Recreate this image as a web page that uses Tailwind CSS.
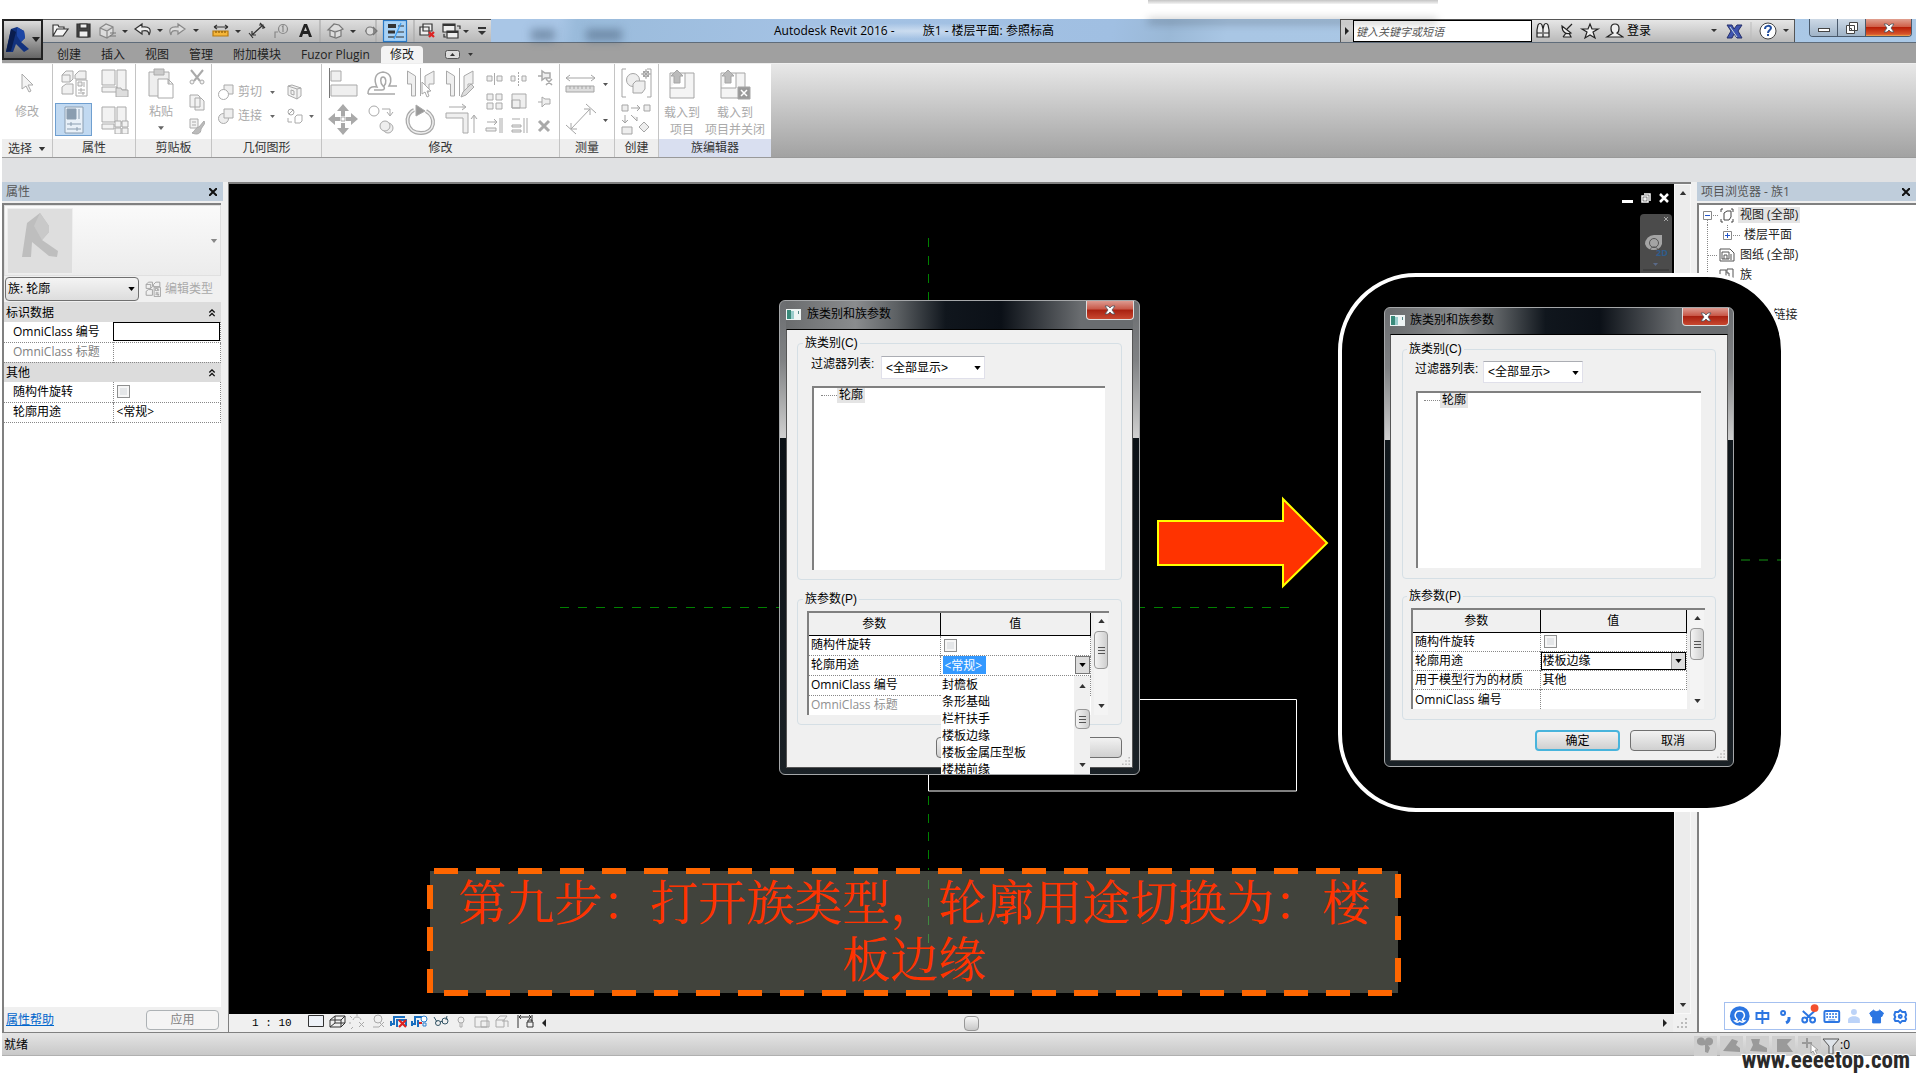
<!DOCTYPE html>
<html lang="zh-CN">
<head>
<meta charset="utf-8">
<title>Autodesk Revit 2016 - 族1 - 楼层平面: 参照标高</title>
<script src="https://cdn.jsdelivr.net/npm/@tailwindcss/browser@4"></script>
</head>
<body class="bg-white text-black text-[12px] leading-4 [font-family:'Open_Sans','Noto_Sans_CJK_SC',sans-serif]">
<svg class="hidden">
  <symbol id="tri" viewBox="0 0 8 5"><path d="M0 0h8L4 5z" fill="currentColor"/></symbol>
  <symbol id="triup" viewBox="0 0 8 5"><path d="M0 5h8L4 0z" fill="currentColor"/></symbol>
  <symbol id="types" viewBox="0 0 28 28"><path d="M2 6l4-4h7v8l-3 3H2zM2 6h8v7M15 6l4-4h7v8H15zM2 18l4-3h7v10H2z"/><path d="M16 11h11v16H16z" fill="#fff"/><path d="M18 13h4v4h-4zM24 13v5M18 21h7M21 19v4M18 24h7M23 23v3"/></symbol>
  <symbol id="chev" viewBox="0 0 8 9"><path d="M1 4l3-3 3 3M1 8l3-3 3 3" fill="none" stroke="#111" stroke-width="1.5"/></symbol>
  <symbol id="wx" viewBox="0 0 12 10"><path d="M1 1h3l2 2 2-2h3L8 5l3 4H8L6 7 4 9H1l3-4z" fill="#fff" stroke="#4a5560" stroke-width=".8"/></symbol>
  <symbol id="dlgicon" viewBox="0 0 15 11"><path d="M0 0h15v11H0z" fill="#eef4f4"/><path d="M1 1h4v9H1z" fill="#3a8a7a"/><path d="M5 2h3v8H5z" fill="#9cc"/><path d="M12 2h1v3h-1z" fill="#588"/></symbol>
  <symbol id="grip" viewBox="0 0 10 10"><path d="M8 0h2v2H8zM8 4h2v2H8zM8 8h2v2H8zM4 4h2v2H4zM4 8h2v2H4zM0 8h2v2H0z" fill="#bbb"/></symbol>
</svg>

<div class="relative flex h-screen min-h-[700px] flex-col overflow-hidden pt-[19px] pr-1 pb-6 pl-0.5">

  <!-- Title bar with the quick access toolbar -->
  <header class="relative flex h-6 shrink-0 border-b border-[#5f6c7a] bg-[linear-gradient(100deg,#a9c6e6_0%,#a9c6e6_29%,#9abbdb_30%,#a4c2e4_42%,#a0bfe2_58%,#9ab8d6_61%,#a9c6e4_64%,#aac8e6_100%)]">
    <button class="absolute top-0 left-0 z-10 flex h-[41px] w-[41px] items-center border-2 border-[#222] bg-gradient-to-b from-[#ddd] to-[#666]" aria-label="应用程序菜单">
      <svg class="h-7 w-7" viewBox="0 0 28 28"><path d="M7 3l6-2 7 4 1 7-4 4 8 7-5 3-8-8-3 8H2z" fill="#12327e"/><path d="M7 3l5 3-5 19-5 1z" fill="#0a1d4e"/><path d="M13 1l7 4 1 7-4 4-4-6z" fill="#1d46a5"/></svg>
      <svg class="h-[5px] w-2 text-[#222]"><use href="#tri"/></svg>
    </button>
    <div class="ml-[41px] flex w-[448px] shrink-0 items-center border-t border-[#555] bg-gradient-to-b from-[#dedede] to-[#b8b8b8] pl-2">
      <svg class="h-[23px] w-[440px]" viewBox="51 20 440 23" fill="none" stroke="#333" stroke-width="1.2">
        <path d="M53 36V25h5l1 2h5v2M53 36l4-7h11l-5 7z" fill="#f4f4f4"/>
        <path d="M77 24h13v13H77z" fill="#444"/><path d="M80 24h7v4h-7zM79 31h9v6h-9z" fill="#eee"/>
        <g stroke="#888"><path d="M100 28l6-4 7 3v7l-6 4-7-3zM100 28l7 3 6-4M107 31v7" fill="#ddd"/><path d="M110 33h6M110 36h6" stroke="#777"/></g>
        <path d="M142 24l-7 5 7 5v-3c5-1 7 0 7 4 3-6 0-9-7-8z" fill="#eee"/>
        <path d="M178 24l7 5-7 5v-3c-5-1-7 0-7 4-3-6 0-9 7-8z" stroke="#888" fill="#ddd"/>
        <path d="M214 27h14M214 27l3-2M214 27l3 2M228 27l-3-2M228 27l-3 2"/><path d="M213 31h15v5h-15z" fill="#f5b63a" stroke="#b87a10"/><path d="M216 31v2M219 31v2M222 31v2M225 31v2" stroke="#8a5a08"/>
        <path d="M252 35l11-10M252 31v4h4M263 29v-4h-4M249 33l4 5M260 23l5 5"/>
        <g stroke="#888"><circle cx="283" cy="29" r="4.500"/><path d="M278 32h-3v6M282 27l1-1v6"/></g>
        <path d="M299 37l5-13h3l5 13h-3l-1-3h-5l-1 3zM304 31h3l-1.500-4z" fill="#222" stroke="none" fill-rule="evenodd"/>
        <path d="M320 20v22M376 20v22M414 20v22" stroke="#aaa"/>
        <path d="M328 30l6-6 5 1 4 4-2 1v6l-5 2-6-2v-6zM330 30l5 2 6-2M335 32v6" stroke="#777" fill="#ddd"/>
        <path d="M365 31h11" stroke="#777"/><circle cx="370" cy="31" r="4" fill="#ddd" stroke="#777"/><path d="M373 27l4 4-4 4" fill="#888" stroke="#777"/>
        <rect x="383.500" y="20.500" width="23" height="21" fill="#a8d2f6" stroke="#2a78c4"/><path d="M388 26h8" stroke-width="4"/><path d="M388 32h7" stroke-width="3"/><path d="M388 37h7"/><path d="M398 26h6M397 32h7M396 37h8"/><path d="M401 23l-7 16" stroke="#3b9cf0"/>
        <path d="M423 24h9v7h-9zM420 27h9v8h-9z" fill="#eee"/><path d="M429 32l5 5M434 32l-5 5" stroke="#d22" stroke-width="2.200"/>
        <path d="M443 24h12v8h-12z" fill="#eee"/><path d="M443 25h12" stroke-width="2"/><path d="M447 31h11v7h-11z" fill="#eee"/><path d="M447 32h11" stroke-width="2"/><path d="M457 26h3v3M444 34v3h2"/>
        <path d="M478 28h8" stroke-width="2"/><path d="M478 31h8l-4 4z" fill="#333" stroke="none"/>
        <path d="M122 30h6l-3 3zM157 29h6l-3 3zM193 29h6l-3 3zM235 30h6l-3 3zM350 30h6l-3 3zM463 30h6l-3 3z" fill="#333" stroke="none"/>
      </svg>
    </div>
    <div class="relative flex flex-1 items-center">
      <span class="absolute top-2.5 left-10 h-3 w-6 bg-[#47607a]/50 blur-xs"></span>
      <span class="absolute top-2.5 left-[95px] h-3 w-9 bg-[#47607a]/50 blur-xs"></span>
      <h1 class="ml-[283px] flex gap-7 whitespace-pre bg-[radial-gradient(closest-side,#ffffff70,#ffffff00)]"><span>Autodesk Revit 2016 -</span><span>族1 - 楼层平面: 参照标高</span></h1>
      <span class="absolute top-0 left-[657px] h-1 w-[289px] bg-black/30 blur-xs"></span>
    </div>
    <div class="flex w-[455px] shrink-0 items-center border border-[#555] border-b-0 bg-gradient-to-b from-[#e6e6e6] to-[#b9b9b9]">
      <svg class="h-2 w-3 shrink-0" viewBox="0 0 12 8"><path d="M4 0l4 4-4 4z" fill="#222"/></svg>
      <input aria-label="搜索" placeholder="键入关键字或短语" class="h-[22px] w-[179px] shrink-0 border border-black bg-white px-0.5 text-[11px] italic placeholder:text-[#555]">
      <svg class="h-[22px] w-[92px] shrink-0" viewBox="1532 20 92 22" fill="#eee" stroke="#222" stroke-width="1.200">
        <path d="M1538 25c1-2 3-2 4 0l1 4v8h-6v-7zM1544 25c1-2 3-2 4 0l1 5v7h-6v-8z"/><path d="M1537 33h5M1544 33h5"/>
        <path d="M1562 26c0 6 4 9 9 7zM1567 29l5-5M1563 37h8l-2-4M1563 37l3-4"/>
        <path d="M1590 24l2 5h6l-5 3 2 6-5-3-5 3 2-6-5-3h6z"/>
        <path d="M1615 24c6 0 4 8 2 9l6 4h-16l6-4c-2-1-4-9 2-9z"/>
      </svg>
      <button class="ml-[3px] shrink-0 whitespace-nowrap">登录</button>
      <svg class="ml-[58px] h-[22px] w-[84px] shrink-0" viewBox="1710 20 84 22" fill="none" stroke="#222">
        <path d="M1712 29h6l-3 3zM1784 29h6l-3 3z" fill="#333" stroke="none"/>
        <path d="M1728 25h5l2 4 3-4h5l-4 6 4 7h-5l-3-4-2 4h-5l4-7z" fill="#3f55b0" stroke="#26306a"/><path d="M1731 27l7 10" stroke="#cdd"/>
        <path d="M1752 22v18" stroke="#bbb"/><circle cx="1769" cy="31" r="8" fill="#fff" stroke="#444"/><path d="M1766 29c0-4 6-4 6-1 0 2-3 2-3 5M1769 34v2" stroke="#234f9e" stroke-width="2"/>
      </svg>
    </div>
    <div class="mr-1 ml-3.5 flex h-[18px] w-[103px] shrink-0 overflow-hidden rounded-b border border-t-0 border-[#4a5a6c]">
      <button class="flex w-7 items-center justify-center border-r border-[#4a5a6c] bg-gradient-to-b from-[#cdd9e6] to-[#9fb3c7]" aria-label="最小化"><span class="mt-1 h-1 w-3 border border-[#444] bg-white"></span></button>
      <button class="flex w-7 items-center justify-center border-r border-[#4a5a6c] bg-gradient-to-b from-[#cdd9e6] to-[#9fb3c7]" aria-label="还原"><svg class="h-3 w-3" viewBox="0 0 12 12" fill="#fff" stroke="#444"><path d="M3.500.500h8v8h-8zM.500 3.500h8v8h-8z"/><path d="M3.500 6.500h2v2h-2z"/></svg></button>
      <button class="flex flex-1 items-center justify-center bg-[linear-gradient(#e0a090,#d0614a_45%,#b81f08_50%,#d8562c_90%,#f0b050)]" aria-label="关闭"><svg class="h-3 w-3"><use href="#wx"/></svg></button>
    </div>
  </header>

  <!-- Ribbon tabs -->
  <nav class="flex h-5 shrink-0 items-end bg-[#a0a0a0] pl-[55px] text-[#222]">
    <div class="flex h-[17px] items-center gap-5">
      <a href="#" class="w-6">创建</a><a href="#" class="w-6">插入</a><a href="#" class="w-6">视图</a><a href="#" class="w-6">管理</a><a href="#" class="w-12">附加模块</a><a href="#" class="w-[71px] whitespace-nowrap">Fuzor Plugin</a>
    </div>
    <a href="#" class="ml-[9px] flex h-[17px] w-[42px] items-center justify-center rounded-t-sm bg-[#f4f4f4]">修改</a>
    <button class="ml-[22px] flex h-[17px] items-center gap-2" aria-label="最小化面板"><svg class="h-2.5 w-[15px]" viewBox="0 0 15 10"><rect x=".5" y=".5" width="14" height="8" rx="2" fill="#ddd" stroke="#555"/><path d="M5 6h5L7.500 3z" fill="#333"/></svg><svg class="h-[3px] w-[5px] text-[#333]"><use href="#tri"/></svg></button>
  </nav>

  <!-- Ribbon -->
  <div class="flex h-[95px] shrink-0 border-t border-b border-t-[#eee] border-b-[#999] bg-gradient-to-b from-[#e8e8e8] to-[#a2a2a2] text-[#aaa]">
    <section class="flex w-[51px] flex-col border-r border-[#c4c4c4] bg-white">
      <button class="flex flex-1 flex-col items-center pt-2"><svg class="h-6 w-4" viewBox="0 0 16 24" fill="#f4f4f4" stroke="#aaa"><path d="M3 2v15l4-3 3 6 2-1-3-6h5z"/></svg><span class="mt-2">修改</span></button>
      <h2 class="flex h-[18px] items-center justify-center gap-1.5 bg-[#eee] pt-0.5 text-[#333]">选择<svg class="h-1 w-2"><use href="#tri"/></svg></h2>
    </section>
    <section class="flex w-[83px] flex-col border-r border-[#c4c4c4] bg-white">
      <div class="grid flex-1 grid-cols-2 place-items-center pt-0.5">
        <svg class="h-7 w-7" fill="#f0f0f0" stroke="#aaa"><use href="#types"/></svg>
        <svg class="h-7 w-7" viewBox="0 0 28 28" fill="#f2f2f2" stroke="#aaa"><path d="M1 1h13v15H1zM16 1h9v20h-9zM1 18h15v5H1z"/><path d="M15 19h5l1 2h6v7H15z" fill="#ddd"/></svg>
        <button class="flex h-[33px] w-[37px] items-center justify-center border border-[#6f9fd0] bg-[#c1d9f1]" aria-label="属性"><svg class="h-7 w-5" viewBox="0 0 20 28" fill="#e8f0f8" stroke="#8a9db0"><path d="M1 1h18v26H1z"/><path d="M3 3h9v10H3z" fill="#8a9db0"/><path d="M15 3v10M3 18h14M7 16v4M3 23h14M13 21v4"/></svg></button>
        <svg class="h-7 w-7" viewBox="0 0 28 28" fill="#f2f2f2" stroke="#aaa"><path d="M1 1h13v15H1zM16 1h9v16h-9zM1 18h12v5H1z"/><path d="M14 15h6v6h-6zM21 15h6v6h-6zM14 22h6v6h-6zM21 22h6v6h-6z"/></svg>
      </div>
      <h2 class="h-[18px] bg-[#eee] pt-px text-center text-[#333]">属性</h2>
    </section>
    <section class="flex w-[76px] flex-col border-r border-[#c4c4c4] bg-white">
      <div class="flex flex-1 justify-between pt-1 pr-1.5 pl-[11px]">
        <button class="flex flex-col items-center"><svg class="h-8 w-7" viewBox="0 0 28 32" fill="#eee" stroke="#aaa"><path d="M2 4h20v24H2z"/><path d="M7 1h10v6H7z" fill="#ccc"/><path d="M11 11h10l5 5v14H11zM21 11v5h5" fill="#fff"/></svg><span class="mt-1">粘贴</span><svg class="mt-1.5 h-1 w-1.5 text-[#666]"><use href="#tri"/></svg></button>
        <svg class="h-[70px] w-4" viewBox="0 -1 16 70" fill="#f2f2f2" stroke="#aaa"><path d="M2 1l9 11M14 1L5 12" stroke-width="2"/><circle cx="3" cy="13" r="2"/><circle cx="13" cy="13" r="2"/><path d="M1 26h8l2 2v10H1zM6 29h6l3 3v9H6z"/><path d="M1 50h8v9H1zM3 53h4M3 56h4"/><path d="M15 52l-5 6c-3 0-4 4-7 6 5 2 9 1 9-4l4-6z" fill="#bbb"/></svg>
      </div>
      <h2 class="h-[18px] bg-[#eee] pt-px text-center text-[#333]">剪贴板</h2>
    </section>
    <section class="flex w-[110px] flex-col border-r border-[#c4c4c4] bg-white">
      <div class="flex flex-1 flex-col gap-2 px-1.5 pt-5">
        <div class="flex h-4 items-center"><svg class="h-4 w-4 shrink-0" viewBox="0 0 16 16" fill="#fff" stroke="#aaa"><path d="M6 1h9v9H6z" fill="#eee"/><circle cx="5.500" cy="10.500" r="5"/></svg><span class="ml-1 shrink-0">剪切</span><svg class="ml-2 h-[3px] w-[5px] shrink-0 text-[#666]"><use href="#tri"/></svg><svg class="ml-3 h-4 w-4 shrink-0" viewBox="0 0 16 16" fill="#f2f2f2" stroke="#aaa"><path d="M1 2l4-1 9 3v8l-4 3-9-4zM10 5v10M10 5l4-1M1 2l9 3M4 6l3 1v4l-3-1z"/></svg></div>
        <div class="flex h-4 items-center"><svg class="h-4 w-4 shrink-0" viewBox="0 0 16 16" fill="#eee" stroke="#aaa"><circle cx="5.500" cy="10.500" r="5"/><path d="M6 1h9v9H6z"/></svg><span class="ml-1 shrink-0">连接</span><svg class="ml-2 h-[3px] w-[5px] shrink-0 text-[#666]"><use href="#tri"/></svg><svg class="ml-3 h-4 w-4 shrink-0" viewBox="0 0 16 16" fill="#fff" stroke="#aaa"><circle cx="4" cy="4" r="3"/><path d="M2 6l4-4M1 10v4h4M8 9l2-2h5v6l-2 2H8z"/></svg><svg class="ml-1.5 h-[3px] w-[5px] shrink-0 text-[#666]"><use href="#tri"/></svg></div>
      </div>
      <h2 class="h-[18px] bg-[#eee] pt-px text-center text-[#333]">几何图形</h2>
    </section>
    <section class="flex w-[238px] flex-col border-r border-[#c4c4c4] bg-white">
      <svg class="w-[237px] flex-1" viewBox="322 64 237 75" fill="#efefef" stroke="#a9a9a9">
        <path d="M329.500 68v30" stroke="#777"/><path d="M331 71h10v10h-10zM331 85h26v11h-26z"/>
        <path d="M368 94h27M368 94c0-6 3-8 9-7-3-6-3-14 6-15 9 1 9 9 6 14h8M374 90h8c3 0 3-3 1-4-3-3-3-9 0-9s4 6 1 9" fill="none" stroke-width="1.500"/>
        <path d="M407.500 71l8 5v20h-4v-12h-4zM434 71l-9 5v16h4v-8h5zM420.500 68v28"/><path d="M422 82v12l3-2 2 5 2-1-2-5h4z" fill="#fff"/>
        <path d="M446.500 71l8 5v20h-4v-12h-4zM473 71l-9 5v16h4v-8h5zM459.500 68v28"/><path d="M461 97l2-5 8-8 3 3-8 8z" fill="#ddd"/>
        <path d="M343 104l6 7h-4v5h-4v-5h-4zM343 135l6-7h-4v-5h-4v5h-4zM328 119l7-6v4h5v4h-5v4zM358 119l-7-6v4h-5v4h5v4z" fill="#a9a9a9" stroke="none"/><path d="M341 117h4v4h-4z" fill="#fff"/>
        <circle cx="374" cy="111" r="5" fill="#fff"/><circle cx="388" cy="128" r="5"/><circle cx="385" cy="126" r="5"/><path d="M382 109h8v6M387 112l3 4 3-4" fill="none"/>
        <path d="M414 110c-10 4-9 23 7 23 14 0 16-16 5-22" fill="none" stroke-width="4"/><path d="M414 110c-10 4-9 23 7 23 14 0 16-16 5-22" fill="none" stroke="#eee" stroke-width="1.500"/><path d="M416 105l9 6-9 5z" fill="#999"/>
        <path d="M446 113h22v20h-5v-15h-17zM449 107h16M462 104l4 3-4 3M474 133v-17M471 119l3-4 3 4"/>
        <path d="M487 76h5v5h-5zM497 76h5v5h-5zM494.500 73v12M511 76h4v5h-4zM522 76h4v5h-4z"/><path d="M518.500 72v14" stroke-dasharray="2 1"/>
        <path d="M538 76h4M542 71v9l3-2h5v-5h-5zM546 79l6 6M552 79l-6 6" stroke-width="1.500"/>
        <path d="M487 94h6v6h-6zM496 94h6v6h-6zM487 103h6v6h-6zM496 103h6v6h-6zM512 94h14v14h-14zM512 100h8v8h-8zM538 102h4M542 97v10l3-3h5v-5h-5z"/>
        <path d="M487 122h10M494 119l3 3-3 3M486 128h10v3h-10zM500 118v15M502 118v15M512 119h8M512 125h9v2h-9zM512 130h9v2h-9zM524 118v15M527 118v15"/>
        <path d="M539 121l10 10M549 121l-10 10" stroke-width="3"/>
      </svg>
      <h2 class="h-[18px] bg-[#eee] pt-px text-center text-[#333]">修改</h2>
    </section>
    <section class="flex w-[55px] flex-col border-r border-[#c4c4c4] bg-white">
      <svg class="w-[54px] flex-1" viewBox="560 64 54 75" fill="#ddd" stroke="#a5a5a5"><path d="M566 78h29M570 75l-4 3 4 3M591 75l4 3-4 3" fill="none"/><path d="M566 86h28v6h-28z"/><path d="M570 86v3M574 86v3M578 86v3M582 86v3M586 86v3M590 86v3"/><path d="M571 129l19-20M571 123v6h6M590 115v-6h-6M566 125l10 9M586 104l10 9" fill="none"/><path d="M603 83h5l-2.500 3zM603 119h5l-2.500 3z" fill="#555" stroke="none"/></svg>
      <h2 class="h-[18px] bg-[#eee] pt-px text-center text-[#333]">测量</h2>
    </section>
    <section class="flex w-[44px] flex-col border-r border-[#c4c4c4] bg-white">
      <svg class="w-[43px] flex-1" viewBox="615 64 43 75" fill="#eee" stroke="#a5a5a5"><path d="M626 69h-4v28h4M647 69h4v28h-4" fill="none"/><circle cx="633" cy="80" r="6.500"/><path d="M633 84l3-3h9v8l-3 4h-9z"/><circle cx="646" cy="74" r="3"/><path d="M646 69v10M641 74h10M643 71l6 6M649 71l-6 6"/><path d="M622 105h6v6h-6zM644 105h6v6h-6zM631 108h9M637 105l3 3-3 3M625 115v8M622 120l3 3 3-3M631 115l6 6v-4M622 127h10v7h-10zM644 122l5 5-5 5-5-5z"/></svg>
      <h2 class="h-[18px] bg-[#eee] pt-px text-center text-[#333]">创建</h2>
    </section>
    <section class="flex w-[112px] flex-col bg-white">
      <div class="flex flex-1 justify-between pr-[5px] pl-[3px]">
        <button class="flex w-10 flex-col items-center pt-1"><svg class="h-8 w-7" viewBox="0 0 28 32" fill="#f4f4f4" stroke="#a5a5a5"><path d="M2 5h24v25H2zM2 20h15V5"/><path d="M9 2l6 6h-3v7H6V8H3z" fill="#bbb"/></svg><span class="mt-1 leading-[17px]">载入到<br>项目</span></button>
        <button class="flex w-[62px] flex-col items-center pt-1"><svg class="h-8 w-8" viewBox="0 0 32 32" fill="#f4f4f4" stroke="#a5a5a5"><path d="M2 5h24v25H2zM2 20h15V5"/><path d="M9 2l6 6h-3v7H6V8H3z" fill="#bbb"/><path d="M19 19h12v12H19z" fill="#999"/><path d="M22 22l6 6M28 22l-6 6" stroke="#fff" stroke-width="1.500"/></svg><span class="mt-1 leading-[17px] whitespace-nowrap">载入到<br>项目并关闭</span></button>
      </div>
      <h2 class="h-[18px] bg-[#d9dff0] pt-px text-center text-[#333]">族编辑器</h2>
    </section>
  </div>
  <div class="h-6 shrink-0 bg-[#e0e1e3]"></div>

  <!-- Work area -->
  <main class="flex min-h-0 flex-1 bg-[#f0f0f0]">
    <aside class="flex w-[221px] shrink-0 flex-col">
      <h2 class="flex h-[19px] items-center justify-between bg-[#bfcddb] pt-px pr-1.5 pl-1 text-[#555]">属性<button aria-label="关闭属性"><svg class="h-2 w-2" viewBox="0 0 8 8" stroke="#111" stroke-width="2"><path d="M0 0l8 8M8 0L0 8"/></svg></button></h2>
      <div class="mt-0.5 mr-0.5 flex flex-1 flex-col border-t-2 border-l-2 border-[#808080] bg-white">
        <div class="flex h-[71px] items-center justify-between border border-[#e0e0e0] bg-gradient-to-b from-[#fafafa] to-[#ececec] pr-0.5 pl-0.5">
          <svg class="h-[66px] w-[66px]" viewBox="0 0 66 66"><path d="M.500.500h65v65H.500z" fill="#dedede" stroke="#eee"/><path d="M20 15l13-10 9 13v6l-7 8 16 11-1 6-8-1-17-14-1 15h-9z" fill="#bebebe"/><path d="M33 5l9 13v6l-7 8-8-14z" fill="#c9c9c9"/></svg>
          <svg class="h-1 w-2 text-[#888]"><use href="#tri"/></svg>
        </div>
        <div class="flex h-[26px] items-center bg-[#f0f0f0] pl-px">
          <div class="relative">
            <select aria-label="族" class="h-6 w-[134px] appearance-none rounded-sm border border-[#707070] bg-gradient-to-b from-[#f4f4f4] to-[#ddd] px-0.5"><option>族: 轮廓</option></select>
            <svg class="pointer-events-none absolute top-2.5 right-1 h-1 w-[7px]"><use href="#tri"/></svg>
          </div>
          <button class="ml-1.5 flex items-center gap-1 text-[#aaa]"><svg class="h-4 w-4" fill="#f0f0f0" stroke="#999" stroke-width="1.500"><use href="#types"/></svg>编辑类型</button>
        </div>
        <table class="w-full table-fixed border-collapse">
          <colgroup><col class="w-[109px]"><col></colgroup>
          <tbody>
            <tr class="h-5 bg-[#dcdcdc]"><th colspan="2" class="px-0.5 pt-px text-left font-normal"><span class="flex items-center justify-between pr-[3px]">标识数据<svg class="h-2 w-2"><use href="#chev"/></svg></span></th></tr>
            <tr class="h-5 border-r border-b border-dotted border-[#888]"><td class="pl-[9px] whitespace-nowrap"><label for="omni">OmniClass 编号</label></td><td><input id="omni" class="block h-[19px] w-full border border-black bg-white"></td></tr>
            <tr class="h-5 border-r border-b border-dotted border-[#888]"><td class="border-r border-dotted border-[#888] pl-[9px] whitespace-nowrap text-[#808080]">OmniClass 标题</td><td></td></tr>
            <tr class="h-5 bg-[#dcdcdc]"><th colspan="2" class="px-0.5 pt-px text-left font-normal"><span class="flex items-center justify-between pr-[3px]">其他<svg class="h-2 w-2"><use href="#chev"/></svg></span></th></tr>
            <tr class="h-5 border-r border-b border-dotted border-[#888]"><td class="border-r border-dotted border-[#888] pl-[9px]"><label for="rot">随构件旋转</label></td><td class="pl-[3px]"><input id="rot" type="checkbox" class="block h-[13px] w-[13px] appearance-none border border-[#8e8f8f] bg-[#e4e6e8] shadow-[inset_0_0_0_2px_#f6f6f6]"></td></tr>
            <tr class="h-5 border-r border-b border-dotted border-[#888]"><td class="border-r border-dotted border-[#888] pl-[9px]">轮廓用途</td><td class="pl-[3px]">&lt;常规&gt;</td></tr>
          </tbody>
        </table>
        <div class="mt-auto flex h-[25px] items-center justify-between bg-[#f0f0f0] pr-0.5 pl-0.5"><a href="#" class="text-[#0066cc] underline">属性帮助</a><button class="h-5 w-[73px] rounded-sm border border-[#adb2b5] bg-[#f4f4f4] text-[#838383]">应用</button></div>
      </div>
    </aside>

    <div class="ml-[5px] flex min-w-0 flex-1 flex-col border-t-2 border-l border-[#808080]">
      <div class="flex min-h-0 flex-1">
        <div class="relative flex-1 overflow-hidden bg-black">
          <div class="absolute top-[9px] right-[5px] flex items-center gap-2">
            <span class="mt-1.5 h-[3px] w-[11px] bg-white"></span>
            <svg class="h-2.5 w-2.5" viewBox="0 0 10 10" fill="none" stroke="#fff" stroke-width="1.500"><path d="M3 1h6v7M1 3h6v6H1z"/><path d="M3 5h2v2H3z"/></svg>
            <svg class="h-2.5 w-2.5" viewBox="0 0 10 10" stroke="#fff" stroke-width="2.500"><path d="M1 1l8 8M9 1L1 9"/></svg>
          </div>
          <svg class="absolute top-[30px] right-0.5 h-[70px] w-8" viewBox="0 0 32 70"><rect width="32" height="80" rx="4" fill="#4b4b4b"/><path d="M24 3l4 4M28 3l-4 4" stroke="#aaa"/><path d="M5 30a9 9 0 019-9h8v9a9 9 0 01-17 0z" fill="#a4a4a4"/><circle cx="14" cy="29" r="4.500" fill="none" stroke="#555"/><path d="M10 36c1-4 7-4 8 0" fill="none" stroke="#555"/><text x="16" y="42" font-size="9" font-weight="bold" fill="#2f5d8c">2D</text><path d="M13 49h5l-2.500 3z" fill="#5a6a88"/><path d="M3 56h26" stroke="#333"/></svg>
        </div>
        <div class="flex w-[17px] flex-col items-center justify-between border border-[#f8f8f8] bg-[#ececec] py-1.5"><svg class="h-1 w-2 text-[#333]"><use href="#triup"/></svg><svg class="h-1 w-2 text-[#333]"><use href="#tri"/></svg></div>
      </div>
      <div class="flex h-[18px] shrink-0 items-center">
        <span class="ml-[23px] w-[55px] whitespace-pre [font-family:'Liberation_Mono',monospace] text-[11px]">1 : 10</span>
        <svg class="h-[18px] w-[233px]" viewBox="307 1013 233 18" fill="none" stroke="#555">
          <path d="M308.500 1014.500h15v11h-15z" fill="#eef2f8" stroke="#333"/>
          <g stroke="#333"><path d="M330 1019l5-4h10l-4 4zM330 1019v7h11v-7M341 1026l4-4v-7M335 1015v7l-5 4M335 1022h10"/></g>
          <g stroke="#aaa"><path d="M357 1015v-2M352 1017l-2-2M351 1022h-2M353 1019c1-4 7-4 8 0M353 1026l-2 2M359 1021l5 5M364 1021l-5 5"/><circle cx="378" cy="1018" r="4"/><path d="M373 1026h6M379 1021l5 5M384 1021l-5 5"/></g>
          <path d="M391 1023h3v-7h11M397 1026v-7h9v6M391 1020v5" stroke="#1a6fc0" stroke-width="2"/><path d="M399 1019l7 7M406 1019l-7 7" stroke="#d22" stroke-width="2.200"/>
          <path d="M412 1023h3v-7h7M418 1026v-7M412 1020v5" stroke="#1a6fc0" stroke-width="2"/><circle cx="424" cy="1018" r="3" stroke="#2a7fd0" fill="#fff"/><path d="M423 1022h3v3h-3z" stroke="#2a7fd0"/><path d="M419 1022h3" stroke="#d22" stroke-width="2"/>
          <g stroke="#356"><path d="M434 1016l3 5M447 1015l-1 4M440 1021l3-1"/><circle cx="438" cy="1022" r="2.500"/><circle cx="445" cy="1020" r="3"/></g>
          <g stroke="#aaa"><circle cx="461" cy="1019" r="3"/><path d="M460 1022v4h2v-4M475 1016h12v10h-12zM481 1020h8v6h-8zM496 1019l4-4h7l-3 4zM496 1019v7h8v-7M502 1020h6v6"/></g>
          <g stroke="#333"><path d="M518 1014v13M532 1014v6M519 1016h12M521 1014l-2 2 2 2M529 1014l2 2-2 2"/><path d="M527 1021h6v5h-6zM528 1021v-2h4v2"/></g>
        </svg>
        <div class="relative flex h-full flex-1 items-center justify-between bg-[#ececec] px-0.5"><svg class="h-2 w-1" viewBox="0 0 4 8"><path d="M4 0L0 4l4 4z" fill="#222"/></svg><span class="absolute top-0.5 left-[424px] h-[15px] w-[15px] rounded-sm border border-[#979797] bg-gradient-to-b from-[#f6f6f6] to-[#c8c8c8]"></span><svg class="mr-1 h-2 w-1" viewBox="0 0 4 8"><path d="M0 0l4 4-4 4z" fill="#222"/></svg></div>
        <svg class="mr-1 ml-1 h-2.5 w-2.5"><use href="#grip"/></svg>
      </div>
    </div>

    <aside class="ml-1.5 flex w-[219px] shrink-0 flex-col">
      <h2 class="flex h-[19px] items-center justify-between bg-[#bfcddb] pt-px pr-1.5 pl-1 text-[#555]">项目浏览器 - 族1<button aria-label="关闭项目浏览器"><svg class="h-2 w-2" viewBox="0 0 8 8" stroke="#111" stroke-width="2"><path d="M0 0l8 8M8 0L0 8"/></svg></button></h2>
      <ul class="mt-0.5 flex flex-1 flex-col border-t-2 border-l-2 border-[#808080] bg-white text-[#222]">
        <li class="flex h-5 items-center pl-[3px]"><svg class="h-5 w-9" viewBox="0 0 36 20" fill="none" stroke="#888"><path d="M1.500 6.500h8v8h-8z"/><path d="M3 10.500h5" stroke="#25c"/><path d="M11 10.500h6M5.500 15v5" stroke-dasharray="1 1"/><path d="M21 4h-2v3M29 4h2v3M19 14v3h2M31 14v3h-2M22 8l3-2h4v6l-2 3h-5z" stroke="#444"/></svg><span class="bg-[#e4e4e4] px-0.5">视图 (全部)</span></li>
        <li class="flex h-5 items-center pl-[3px]"><svg class="h-5 w-10" viewBox="0 0 40 20" fill="none" stroke="#888"><path d="M5.500 0v20M25.500 0v6M31 10.500h8" stroke-dasharray="1 1"/><path d="M21.500 6.500h8v8h-8z"/><path d="M23 10.500h5M25.500 8v5" stroke="#25c"/></svg><span class="ml-0.5">楼层平面</span></li>
        <li class="flex h-5 items-center pl-[3px]"><svg class="h-5 w-9" viewBox="0 0 36 20" fill="none" stroke="#888"><path d="M5.500 0v20M6 10.500h10" stroke-dasharray="1 1"/><path d="M18 4h10l4 4v8H18zM20 7h7v7h-7zM22 14v-4h3v4M29 9v6" stroke="#555"/></svg><span class="ml-0.5">图纸 (全部)</span></li>
        <li class="flex h-5 items-center pl-[3px]"><svg class="h-5 w-9" viewBox="0 0 36 20" fill="none" stroke="#555"><path d="M5.500 0v20" stroke="#888" stroke-dasharray="1 1"/><path d="M18 5h6v6h-6zM25 4h6v12h-4v-8h-2zM20 13h5v3"/></svg><span class="ml-0.5">族</span></li>
        <li class="h-5"></li>
        <li class="flex h-5 items-center pl-11">Revit 链接</li>
      </ul>
    </aside>
  </main>

  <!-- Status bar -->
  <footer class="flex h-6 shrink-0 items-center border-t border-b border-t-[#808080] border-b-[#b0b0b0] bg-gradient-to-b from-[#e4e4e4] to-[#c8c8c8] pt-px pl-0.5">
    <span>就绪</span>
    <svg class="ml-auto h-[22px] w-[138px]" viewBox="1695 1033 138 22" fill="#9a9a9a">
      <g fill="#cfcfcf"><path d="M1695 1035h23v20h-23zM1721 1035h23v20h-23zM1747 1035h23v20h-23zM1773 1035h23v20h-23zM1799 1035h23v20h-23z"/></g>
      <path d="M1698 1041a4 4 0 018-1 4 4 0 018 1c0 3-4 4-5 3l2 3-2 5-3-1v-7c-4 1-8 0-8-3zM1724 1050l9-12 6 2-2 4 4 3v4zM1752 1038h9l-1 5 8 4v4l-17-1 3-6zM1778 1038h15l-5 5 6 8h-16z"/>
      <path d="M1808 1037v10M1803 1042h10" stroke="#9a9a9a" stroke-width="2"/><path d="M1812 1043v9l2-2 2 4 2-1-2-4h3z" fill="#fff" stroke="#999"/>
    </svg>
    <svg class="-ml-2.5 h-[22px] w-[18px]" viewBox="0 0 18 22"><path d="M1 5h16l-6 7v8H7v-8z" fill="#dfe4ea" stroke="#555"/></svg>
    <span class="mr-[66px]">:0</span>
  </footer>

  <!-- Reference planes and the profile sketch on the drawing canvas -->
  <svg class="pointer-events-none absolute inset-0 h-full w-full" fill="none"><g stroke="#008000" stroke-dasharray="9 9"><path d="M928.500 238V870M560 607.500h738"/></g><path d="M928.500 699.500h368v91.500h-368z" stroke="#fff"/></svg>

  <!-- Instruction caption -->
  <div class="absolute top-[871px] left-[430px] flex h-[122px] w-[968px] justify-center bg-[#41433c] px-5">
    <svg class="absolute -inset-1 h-[130px] w-[976px]" fill="none" stroke="#ff6600" stroke-width="6" stroke-dasharray="24 18"><path d="M8 4h962M18 126h952M4 18v108M972 7v116"/></svg>
    <svg class="absolute inset-0 h-full w-full" fill="none" stroke="#3f8a3f" stroke-dasharray="9 9"><path d="M498.500 9v72"/></svg>
    <p class="relative text-center text-[48px] leading-[57px] font-normal text-[#ff3300] [font-family:'Noto_Serif_CJK_SC','Noto_Sans_CJK_SC',serif]">第九步：打开族类型，轮廓用途切换为：楼板边缘</p>
  </div>

  <!-- Family category dialog, list open -->
  <section class="absolute top-[300px] left-[779px] h-[475px] w-[361px] rounded-md border border-[#a5a7a9] bg-[linear-gradient(180deg,#6b6d70_0,#808284_60px,#d0d0d0_137px,#0b1116_137px,#1a2126_100%)] px-[6px]">
    <header class="flex h-7 items-start bg-[linear-gradient(90deg,#6a6c6e_0,#8a8c8e_20%,#5c6063_32%,#10161d_46%,#0b1017_62%,#6a6d70_85%,#6a6d70)]">
      <svg class="mt-2 h-[11px] w-[15px]"><use href="#dlgicon"/></svg><h2 class="mt-[5px] ml-1.5">族类别和族参数</h2>
      <button class="-mr-px ml-auto flex h-[19px] w-12 items-center justify-center rounded-b border border-t-0 border-[#ddd] bg-[linear-gradient(#dd9a90,#c85848_45%,#a82010_50%,#c84830)]" aria-label="关闭"><svg class="h-2.5 w-3"><use href="#wx"/></svg></button>
    </header>
    <div class="relative flex h-[439px] flex-col border border-t-black border-[#555] bg-[#f0f0f0] px-2.5 pt-[5px] [font-family:'Liberation_Sans','Noto_Sans_CJK_SC',sans-serif]">
      <fieldset class="h-[245px] rounded-sm border border-[#d5dfe5]">
        <legend class="ml-[5px] h-4 px-0.5">族类别(C)</legend>
        <div class="mt-[5px] flex h-[23px] pl-[13px]"><label for="f1" class="w-[70px]">过滤器列表:</label>
          <div class="relative"><select id="f1" class="h-[23px] w-[104px] appearance-none border border-[#e0e0ea] border-t-[#abadb3] bg-white px-1"><option>&lt;全部显示&gt;</option></select><svg class="pointer-events-none absolute top-2.5 right-1 h-1 w-[7px]"><use href="#tri"/></svg></div></div>
        <div class="mt-[7px] ml-[14px] h-[184px] w-[293px] border-t-2 border-l-2 border-[#808080] bg-white"><div class="flex items-center pl-[7px]"><span class="w-4 border-t border-dotted border-[#888]"></span><span class="h-[15px] bg-[#e4e4e4] px-0.5 leading-[15px]">轮廓</span></div></div>
      </fieldset>
      <fieldset class="mt-[11px] h-[134px] rounded-sm border border-[#d5dfe5]">
        <legend class="ml-[5px] h-4 px-0.5">族参数(P)</legend>
        <div class="mt-1 ml-[9px] flex h-[104px] w-[302px] overflow-hidden border-t-2 border-l-2 border-[#808080] bg-[#f0f0f0] [font-family:'Open_Sans','Noto_Sans_CJK_SC',sans-serif]">
          <table class="w-[282px] table-fixed border-collapse bg-white whitespace-nowrap">
            <colgroup><col class="w-[131px]"><col></colgroup>
            <thead><tr class="h-[22px] border-r border-b border-black bg-[#f0f0f0]"><th class="border-r border-black font-normal">参数</th><th class="font-normal">值</th></tr></thead>
            <tbody>
              <tr class="h-5 border-r border-b border-dotted border-[#888]"><td class="border-r border-dotted border-[#888] px-0.5"><label for="r1">随构件旋转</label></td><td class="pl-[3px]"><input id="r1" type="checkbox" class="block h-[13px] w-[13px] appearance-none border border-[#8e8f8f] bg-[#e4e6e8] shadow-[inset_0_0_0_2px_#f6f6f6]"></td></tr>
              <tr class="h-5 border-r border-b border-dotted border-[#888]"><td class="border-r border-dotted border-[#888] px-0.5"><label for="u1">轮廓用途</label></td><td><div class="flex justify-between pl-0.5"><input id="u1" value="&lt;常规&gt;" class="h-[18px] w-[43px] bg-[#3399ff] px-0.5 text-white"><button aria-label="展开" class="flex h-[18px] w-[15px] items-center justify-center border border-[#777] bg-[#ddd]"><svg class="h-1 w-[7px]"><use href="#tri"/></svg></button></div></td></tr>
              <tr class="h-5 border-r border-b border-dotted border-[#888]"><td class="px-0.5">OmniClass 编号</td><td></td></tr>
              <tr class="h-5"><td class="px-0.5 text-[#909090]">OmniClass 标题</td><td></td></tr>
            </tbody>
          </table>
          <div class="mr-px ml-[3px] flex flex-1 flex-col items-center bg-[#f4f4f4] pt-1.5"><svg class="h-1 w-[7px] text-[#333]"><use href="#triup"/></svg><div class="mt-2 flex h-[38px] w-full flex-col items-center justify-center gap-0.5 rounded-sm border border-[#979797] bg-gradient-to-r from-[#f4f4f4] to-[#cfcfcf]"><i class="h-px w-[7px] bg-[#555]"></i><i class="h-px w-[7px] bg-[#555]"></i><i class="h-px w-[7px] bg-[#555]"></i></div><svg class="mt-auto mb-[7px] h-1 w-[7px] text-[#333]"><use href="#tri"/></svg></div>
        </div>
      </fieldset>
      <div class="mt-3 flex justify-end gap-3"><button class="h-[21px] w-[87px] rounded-sm border border-[#707070] bg-gradient-to-b from-[#f2f2f2] to-[#d0d0d0]" aria-label="确定"></button><button class="h-[21px] w-[87px] rounded-sm border border-[#707070] bg-gradient-to-b from-[#f2f2f2] to-[#d0d0d0]" aria-label="取消"></button></div>
      <svg class="absolute right-0.5 bottom-0.5 h-2 w-2"><use href="#grip"/></svg>
    </div>
    <!-- Open option list -->
    <div class="absolute top-[375px] left-[161px] flex h-[98px] w-[149px] overflow-hidden bg-white">
      <ul class="flex-1 pl-px leading-[17px] whitespace-nowrap"><li>封檐板</li><li>条形基础</li><li>栏杆扶手</li><li>楼板边缘</li><li>楼板金属压型板</li><li>楼梯前缘</li></ul>
      <div class="flex w-4 flex-col items-center bg-[#f0f0f0] pt-2"><svg class="h-1 w-[7px] text-[#333]"><use href="#triup"/></svg><div class="mt-[21px] flex h-5 w-[15px] flex-col items-center justify-center gap-0.5 rounded-sm border border-[#979797] bg-gradient-to-r from-[#f4f4f4] to-[#cfcfcf]"><i class="h-px w-[7px] bg-[#555]"></i><i class="h-px w-[7px] bg-[#555]"></i><i class="h-px w-[7px] bg-[#555]"></i></div><svg class="mt-auto mb-[7px] h-1 w-[7px] text-[#333]"><use href="#tri"/></svg></div>
    </div>
  </section>

  <!-- Arrow to the result -->
  <svg class="absolute top-[496px] left-[1156px] h-[94px] w-[174px]" viewBox="0 0 174 94"><path d="M2 25h125V3l44 44-44 43V69H2z" fill="#ff3300" stroke="#ffff00" stroke-width="2"/></svg>

  <!-- Result callout -->
  <section class="absolute top-[273px] left-[1338px] h-[539px] w-[447px] overflow-hidden rounded-[78px] border-4 border-white bg-black">
    <svg class="absolute top-[281px] right-0 h-1 w-[42px]"><path d="M2 2h40" stroke="#0a4a0a" stroke-width="2" stroke-dasharray="9 9"/></svg>
    <div class="absolute top-[30px] left-[42px] h-[460px] w-[350px] rounded-md border border-[#a5a7a9] bg-[linear-gradient(180deg,#6b6d70_0,#808284_60px,#d0d0d0_132px,#10171c_132px,#1a2126_100%)] px-[5px]">
      <header class="flex h-[26px] items-start bg-[linear-gradient(90deg,#6a6c6e_0,#8a8c8e_20%,#5c6063_32%,#10161d_46%,#0b1017_62%,#6a6d70_85%,#6a6d70)]">
        <svg class="mt-[7px] h-[11px] w-[15px]"><use href="#dlgicon"/></svg><h2 class="mt-1 ml-[5px]">族类别和族参数</h2>
        <button class="-mr-px ml-auto flex h-[18px] w-[47px] items-center justify-center rounded-b border border-t-0 border-[#ddd] bg-[linear-gradient(#dd9a90,#c85848_45%,#a82010_50%,#c84830)]" aria-label="关闭"><svg class="h-2.5 w-3"><use href="#wx"/></svg></button>
      </header>
      <div class="relative flex h-[427px] flex-col border border-t-black border-[#555] bg-[#f0f0f0] px-[11px] pt-1.5 [font-family:'Liberation_Sans','Noto_Sans_CJK_SC',sans-serif]">
        <fieldset class="h-[238px] rounded-sm border border-[#d5dfe5]">
          <legend class="ml-1 h-4 px-0.5">族类别(C)</legend>
          <div class="mt-1 flex h-[22px] pl-3"><label for="f2" class="w-[68px]">过滤器列表:</label>
            <div class="relative"><select id="f2" class="h-[22px] w-[100px] appearance-none border border-[#e0e0ea] border-t-[#abadb3] bg-white px-1"><option>&lt;全部显示&gt;</option></select><svg class="pointer-events-none absolute top-2.5 right-1 h-1 w-[7px]"><use href="#tri"/></svg></div></div>
          <div class="mt-2 ml-[13px] h-[177px] w-[285px] border-t-2 border-l-2 border-[#808080] bg-white"><div class="flex items-center pl-1.5"><span class="w-4 border-t border-dotted border-[#888]"></span><span class="h-[15px] bg-[#e4e4e4] px-0.5 leading-[15px]">轮廓</span></div></div>
        </fieldset>
        <fieldset class="mt-[9px] h-[132px] rounded-sm border border-[#d5dfe5]">
          <legend class="ml-1 h-4 px-0.5">族参数(P)</legend>
          <div class="mt-1 ml-2 flex h-[101px] w-[294px] overflow-hidden border-t-2 border-l-2 border-[#808080] bg-[#f0f0f0] [font-family:'Open_Sans','Noto_Sans_CJK_SC',sans-serif]">
            <table class="w-[274px] table-fixed border-collapse bg-white whitespace-nowrap">
              <colgroup><col class="w-[127px]"><col></colgroup>
              <thead><tr class="h-[22px] border-r border-b border-black bg-[#f0f0f0]"><th class="border-r border-black font-normal">参数</th><th class="font-normal">值</th></tr></thead>
              <tbody>
                <tr class="h-[19px] border-r border-b border-dotted border-[#888]"><td class="border-r border-dotted border-[#888] px-0.5"><label for="r2">随构件旋转</label></td><td class="pl-[3px]"><input id="r2" type="checkbox" class="block h-[13px] w-[13px] appearance-none border border-[#8e8f8f] bg-[#e4e6e8] shadow-[inset_0_0_0_2px_#f6f6f6]"></td></tr>
                <tr class="h-[19px] border-r border-b border-dotted border-[#888]"><td class="border-r border-dotted border-[#888] px-0.5"><label for="u2">轮廓用途</label></td><td><div class="relative"><select id="u2" class="block h-[18px] w-full appearance-none border border-black bg-white px-px"><option>楼板边缘</option></select><span class="pointer-events-none absolute top-px right-px flex h-4 w-[14px] items-center justify-center border-l border-[#999] bg-[#ddd]"><svg class="h-1 w-[7px]"><use href="#tri"/></svg></span></div></td></tr>
                <tr class="h-[19px] border-r border-b border-dotted border-[#888]"><td class="border-r border-dotted border-[#888] px-0.5">用于模型行为的材质</td><td class="px-0.5">其他</td></tr>
                <tr class="h-[19px]"><td class="border-r border-dotted border-[#888] px-0.5">OmniClass 编号</td><td></td></tr>
              </tbody>
            </table>
            <div class="mr-px ml-[3px] flex flex-1 flex-col items-center bg-[#f4f4f4] pt-1.5"><svg class="h-1 w-[7px] text-[#333]"><use href="#triup"/></svg><div class="mt-2 flex h-8 w-full flex-col items-center justify-center gap-0.5 rounded-sm border border-[#979797] bg-gradient-to-r from-[#f4f4f4] to-[#cfcfcf]"><i class="h-px w-[7px] bg-[#555]"></i><i class="h-px w-[7px] bg-[#555]"></i><i class="h-px w-[7px] bg-[#555]"></i></div><svg class="mt-auto mb-1.5 h-1 w-[7px] text-[#333]"><use href="#tri"/></svg></div>
          </div>
        </fieldset>
        <div class="mt-2.5 flex justify-end gap-2.5"><button class="h-[21px] w-[85px] rounded-sm border-2 border-[#48b4dc] bg-gradient-to-b from-[#f2f2f2] to-[#d0d0d0] leading-4">确定</button><button class="h-[21px] w-[86px] rounded-sm border border-[#707070] bg-gradient-to-b from-[#f2f2f2] to-[#d0d0d0]">取消</button></div>
        <svg class="absolute right-0.5 bottom-0.5 h-2 w-2"><use href="#grip"/></svg>
      </div>
    </div>
  </section>

  <!-- Shadow of a floating bar above the window -->
  <div class="absolute top-0 left-[1148px] h-1 w-[290px] bg-gradient-to-b from-[#c4c4c4] to-[#f4f4f4]"></div>

  <!-- Input method bar -->
  <div class="absolute right-1 bottom-[50px] h-7 w-[192px] border border-[#a4c0f0] bg-white">
    <svg class="h-[26px] w-[190px]" viewBox="1726 1003 193 26" fill="none" stroke="#2c76e2" stroke-width="2">
      <circle cx="1741" cy="1016" r="10" fill="#2c76e2" stroke="none"/><path d="M1736 1021c2 0 3-1 2-2-3-3-2-8 3-8s6 5 3 8c-1 1 0 2 2 2-2 2-4 1-5 0-1 1-3 2-5 0z" fill="#2c76e2" stroke="#fff" stroke-width="1.500"/>
      <path d="M1758 1013h12v6h-12zM1764 1010v14"/>
      <circle cx="1785" cy="1013" r="2"/><path d="M1791 1017v2c0 2-1 3-3 4" stroke-width="3"/>
      <path d="M1805 1011l9 8M1817 1011l-9 8"/><circle cx="1807" cy="1020" r="2.500"/><circle cx="1815" cy="1020" r="2.500"/><circle cx="1817" cy="1008" r="4" fill="#f4502e" stroke="none"/>
      <rect x="1827" y="1011" width="15" height="11" rx="1"/><path d="M1829 1014h11M1829 1017h11" stroke-dasharray="1.500 1.500"/><path d="M1831 1020h7" stroke-width="1"/>
      <g fill="#bcd3f8" stroke="none"><circle cx="1857" cy="1012" r="3"/><path d="M1851 1023v-3c0-5 12-5 12 0v3z"/></g>
      <path d="M1873 1013l4-3c1 2 5 2 6 0l4 3-2 4-1-1v7h-8v-7l-1 1z" fill="#2c76e2" stroke-width="1"/>
      <path d="M1904 1010l2 2h3l1 3-1 2 1 2-1 2h-3l-2 2-2-2h-3l-1-2 1-2-1-2 1-3h3z"/><circle cx="1904" cy="1016.500" r="1.500"/>
    </svg>
  </div>
  <div class="absolute right-2.5 bottom-[7px] text-[23px] leading-6 font-bold text-[#2a2a2a] [font-family:'Liberation_Sans_Narrow','Roboto_Condensed',sans-serif] [text-shadow:0_0_2px_#fff,1px_1px_1px_#fff,-1px_-1px_1px_#fff,1px_-1px_1px_#fff]">www.eeeetop.com</div>
</div>
</body>
</html>
